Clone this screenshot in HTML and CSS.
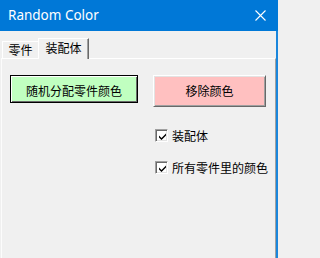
FILE: index.html
```html
<!DOCTYPE html>
<html lang="zh">
<head>
<meta charset="utf-8">
<title>Random Color</title>
<link rel="stylesheet" href="styles.css">
</head>
<body>
<div class="window">
  <div class="titlebar">
    <span class="title">Random Color</span>
    <svg class="close" width="11" height="11" viewBox="0 0 11 11"><path d="M0.5 0.5 L10.5 10.5 M10.5 0.5 L0.5 10.5" stroke="#fff" stroke-width="1.1" fill="none"/></svg>
  </div>
  <div class="client">
    <div class="tabs">
      <div class="tab">零件</div>
      <div class="tab active">装配体</div>
    </div>
    <div class="panel">
      <div class="buttons">
        <button class="btn btn-green">随机分配零件颜色</button>
        <button class="btn btn-pink">移除颜色</button>
      </div>
      <div class="options">
        <label class="check"><span class="box"><svg width="9" height="9" viewBox="0 0 9 9"><path d="M1 3.5 L3.5 6 L8 1.5 L8 3.5 L3.5 8 L1 5.5 Z" fill="#000"/></svg></span><span class="label">装配体</span></label>
        <label class="check"><span class="box"><svg width="9" height="9" viewBox="0 0 9 9"><path d="M1 3.5 L3.5 6 L8 1.5 L8 3.5 L3.5 8 L1 5.5 Z" fill="#000"/></svg></span><span class="label">所有零件里的颜色</span></label>
      </div>
    </div>
  </div>
</div>
</body>
</html>
```

FILE: styles.css
```css
html, body {
  margin: 0;
  padding: 0;
  background: #f0f0f0;
}
body {
  width: 278px;
  height: 258px;
  overflow: hidden;
  font-family: "Noto Sans CJK SC", "Noto Sans", sans-serif;
}
.window {
  width: 278px;
  height: 258px;
  display: flex;
  flex-direction: column;
}
.titlebar {
  height: 31px;
  flex: none;
  background: #0078d7;
  display: flex;
  align-items: center;
  justify-content: space-between;
  padding: 0 12px 0 8px;
}
.title {
  color: #fff;
  font-family: "Noto Sans", sans-serif;
  font-size: 13.5px;
  line-height: 16px;
  margin-top: -1px;
}
.close {
  display: block;
  margin-top: 0;
}
.client {
  flex: 1;
  display: flex;
  flex-direction: column;
  border-right: 2px solid #1a86dc;
  background: #f0f0f0;
}
.tabs {
  height: 27px;
  flex: none;
  display: flex;
  align-items: flex-end;
  padding-left: 2px;
}
.tab {
  font-size: 12px;
  line-height: 14px;
  color: #000;
  box-sizing: border-box;
  height: 17px;
  width: 36px;
  padding-top: 1px;
  text-align: center;
  border-top: 1px solid #fff;
  border-left: 1px solid #fff;
}
.tab.active {
  position: relative;
  z-index: 1;
  height: 21px;
  width: 51px;
  margin-bottom: -1px;
  padding-top: 2px;
  background: #f0f0f0;
  border-right: 1px solid #696969;
  box-shadow: inset -1px 0 0 #a0a0a0;
}
.panel {
  flex: 1;
  margin-left: 1px;
  border-top: 1px solid #fff;
  border-left: 1px solid #fcfcfc;
  border-right: 1px solid #a0a0a0;
  padding: 16px 0 0 8px;
}
.buttons {
  display: flex;
  align-items: flex-start;
  gap: 15px;
}
.btn {
  appearance: none;
  margin: 0;
  box-sizing: border-box;
  font-family: "Noto Sans CJK SC", sans-serif;
  font-size: 12px;
  line-height: 14px;
  color: #000;
  padding: 0;
  display: flex;
  align-items: center;
  justify-content: center;
}
.btn-green {
  width: 128px;
  height: 28px;
  padding-top: 3px;
  background: #c0ffc0;
  border: 1px solid #000;
  box-shadow: inset 1px 1px 0 #fff, inset -1px -1px 0 #696969;
}
.btn-pink {
  width: 113px;
  height: 32px;
  background: #ffc0c0;
  border-top: 1px solid #fff;
  border-left: 1px solid #fff;
  border-right: 1px solid #696969;
  border-bottom: 1px solid #696969;
  box-shadow: inset 1px 1px 0 #e3e3e3, inset -1px -1px 0 #a0a0a0;
}
.options {
  margin: 22px 0 0 145px;
  display: flex;
  flex-direction: column;
  gap: 19px;
}
.check {
  display: flex;
  align-items: center;
  height: 13px;
  gap: 4px;
}
.box {
  box-sizing: border-box;
  width: 13px;
  height: 13px;
  flex: none;
  background: #fff;
  border-top: 1px solid #a0a0a0;
  border-left: 1px solid #a0a0a0;
  border-right: 1px solid #fff;
  border-bottom: 1px solid #fff;
  box-shadow: inset 1px 1px 0 #696969, inset -1px -1px 0 #e3e3e3;
  display: flex;
  align-items: center;
  justify-content: center;
}
.box svg {
  display: block;
  margin: 1px 0 0 1px;
}
.label {
  font-size: 12px;
  line-height: 14px;
  color: #000;
  white-space: nowrap;
}
```
